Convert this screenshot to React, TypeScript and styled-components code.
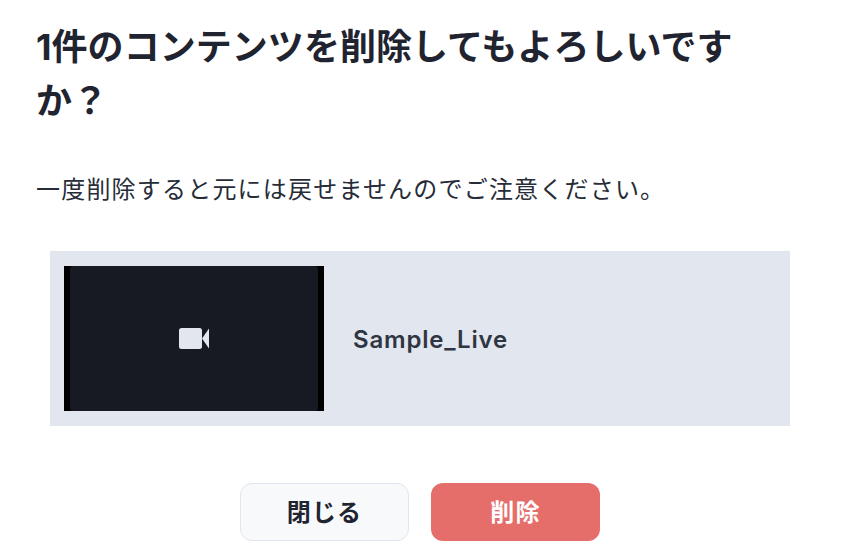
import React from "react";
import styled, { createGlobalStyle } from "styled-components";

const Global = createGlobalStyle`
  html, body { margin: 0; padding: 0; background: #fff; }
  body { font-family: Inter, "Noto Sans CJK JP", sans-serif; color: #1a202c; }
`;

const Dialog = styled.div`
  width: 844px;
  height: 560px;
  box-sizing: border-box;
  padding: 20px 36px 0;
  display: flex;
  flex-direction: column;
  overflow: hidden;
`;

const Title = styled.h2`
  margin: 0;
  width: 720px;
  font-size: 36px;
  line-height: 54px;
  font-weight: 700;
  letter-spacing: 0.05px;
  color: #1f2430;
`;

const Message = styled.p`
  margin: 44px 0 0;
  font-size: 24px;
  line-height: 36px;
  font-weight: 400;
  letter-spacing: 1.2px;
  color: #262c38;
`;

const ContentList = styled.div`
  margin: 43px 0 0 14px;
  width: 740px;
  height: 175px;
  padding: 15px 14px;
  box-sizing: border-box;
  background: #e2e6ee;
  display: flex;
  align-items: center;
  gap: 29px;
`;

const Thumbnail = styled.div`
  width: 260px;
  height: 145px;
  flex: none;
  background: #000;
  display: flex;
  justify-content: center;
`;

const ThumbnailInner = styled.div`
  width: 248px;
  height: 100%;
  background: #171a22;
  border-radius: 3px;
  display: flex;
  align-items: center;
  justify-content: center;
`;

const ContentName = styled.span`
  font-size: 24px;
  font-weight: 600;
  letter-spacing: 0.8px;
  padding-top: 2px;
  color: #2f3542;
`;

const Actions = styled.div`
  margin-top: 57px;
  display: flex;
  justify-content: center;
  gap: 22px;
  padding-right: 4px;
`;

const Button = styled.button<{ $danger?: boolean }>`
  width: 169px;
  height: 58px;
  box-sizing: border-box;
  border-radius: 12px;
  border: ${(p) => (p.$danger ? "none" : "1px solid #e2e6ee")};
  background: ${(p) => (p.$danger ? "#e56e6b" : "#f8f9fb")};
  color: ${(p) => (p.$danger ? "#fff" : "#1f2430")};
  font-family: inherit;
  font-size: 24px;
  font-weight: 700;
  letter-spacing: 1.2px;
  padding: 0 0 3px;
`;

const VideoIcon = () => (
  <svg width="30" height="21" viewBox="0 0 30 21" fill="#e2e6ee" aria-hidden="true">
    <rect x="0" y="0" width="23" height="21" rx="2.5" />
    <path d="M23 10.5 30 .5V20.5Z" />
  </svg>
);

export default function App() {
  return (
    <>
      <Global />
      <Dialog>
        <Title>1件のコンテンツを削除してもよろしいですか？</Title>
        <Message>一度削除すると元には戻せませんのでご注意ください。</Message>
        <ContentList>
          <Thumbnail>
            <ThumbnailInner>
              <VideoIcon />
            </ThumbnailInner>
          </Thumbnail>
          <ContentName>Sample_Live</ContentName>
        </ContentList>
        <Actions>
          <Button>閉じる</Button>
          <Button $danger>削除</Button>
        </Actions>
      </Dialog>
    </>
  );
}
